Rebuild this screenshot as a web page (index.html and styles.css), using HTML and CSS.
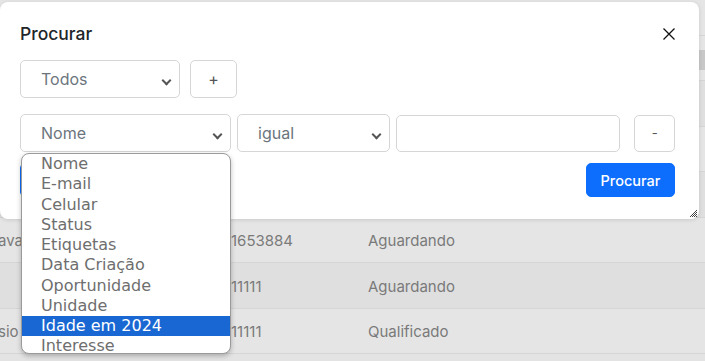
FILE: index.html
```html
<!DOCTYPE html>
<html lang="pt-BR">
<head>
	<meta charset="UTF-8">
	<title>Procurar</title>
	<link rel="stylesheet" href="styles.css">
</head>
<body>
	<!-- tabela de fundo (atras do modal) -->
	<div class="lista">
		<div class="linha topo"></div>
		<div class="linha"><span class="etiqueta"></span></div>
		<div class="linha escura"></div>
		<div class="linha"></div>
		<div class="linha escura"></div>
		<div class="linha">
			<span class="col1">ava</span>
			<span class="col2">1653884</span>
			<span class="col3">Aguardando</span>
		</div>
		<div class="linha escura">
			<span class="col1"></span>
			<span class="col2">11111</span>
			<span class="col3">Aguardando</span>
		</div>
		<div class="linha">
			<span class="col1">sio</span>
			<span class="col2">11111</span>
			<span class="col3">Qualificado</span>
		</div>
	</div>

	<div class="modal">
		<div class="modal-head">
			<h5>Procurar</h5>
			<button class="fechar" aria-label="Fechar">
				<svg width="12" height="12" viewBox="0 0 12 12"><path d="M0.5 0.5L11.5 11.5M11.5 0.5L0.5 11.5" stroke="#111" stroke-width="1.3" fill="none"/></svg>
			</button>
		</div>
		<div class="modal-body">
			<div class="fila">
				<div class="sel w-todos">Todos<i class="seta"></i></div>
				<button class="btn mais">+</button>
			</div>
			<div class="fila fila2">
				<div class="sel w-campo">Nome<i class="seta"></i></div>
				<div class="sel w-op">igual<i class="seta"></i></div>
				<input class="campo" type="text">
				<button class="btn menos">-</button>
			</div>
			<div class="fila fila3">
				<button class="btn limpar"></button>
				<button class="btn azul">Procurar</button>
			</div>
		</div>
		<svg class="redim" width="9" height="9" viewBox="0 0 9 9">
			<path d="M8 1L1 8M8 3L3 8M8 5L5 8M8 7L7 8" stroke="#444" stroke-width="1" fill="none"/>
		</svg>
	</div>

	<!-- lista aberta do select "Nome" -->
	<ul class="opcoes">
		<li>Nome</li>
		<li>E-mail</li>
		<li>Celular</li>
		<li>Status</li>
		<li>Etiquetas</li>
		<li>Data Criação</li>
		<li>Oportunidade</li>
		<li>Unidade</li>
		<li class="ativo">Idade em 2024</li>
		<li>Interesse</li>
	</ul>
</body>
</html>
```

FILE: styles.css
```css
*{
	margin: 0;
	padding: 0;
	box-sizing: border-box;
	list-style: none;
}
body{
	background: #e3e3e3;
	font-family: Inter, "Liberation Sans", sans-serif;
	overflow: hidden;
	width: 705px;
	height: 361px;
	position: relative;
}

/* fundo */
.lista{
	display: flex;
	flex-direction: column;
}
.linha{
	height: 45.43px;
	border-bottom: 1px solid #d5d5d5;
	background: #e5e5e5;
	display: flex;
	align-items: center;
	font-size: 15px;
	color: #7a7a7a;
	position: relative;
	padding-top: 2px;
}
.linha.escura{
	background: #dfdfdf;
}
.linha.topo{
	height: 36px;
}
.etiqueta{
	position: absolute;
	left: 697px;
	top: 14px;
	width: 20px;
	height: 20px;
	background: #c8c8c8;
}
.col1{
	width: 233px;
	margin-left: -2px;
	white-space: nowrap;
}
.col2{
	width: 137px;
	white-space: nowrap;
}

/* modal */
.modal{
	position: absolute;
	left: 0;
	top: 2px;
	width: 699px;
	height: 217px;
	background: #fff;
	border-radius: 8px;
	box-shadow: 0 1px 4px rgba(0,0,0,.12);
}
.modal-head{
	display: flex;
	justify-content: space-between;
	align-items: center;
	padding: 21px 24px 0 20px;
}
.modal-head h5{
	font-size: 17.5px;
	font-weight: 500;
	line-height: 22px;
	color: #212529;
}
.fechar{
	border: 0;
	background: none;
	width: 12px;
	height: 12px;
	display: flex;
}
.modal-body{
	padding: 15px 24px 0 20px;
	display: flex;
	flex-direction: column;
}
.fila{
	display: flex;
	align-items: center;
	gap: 10px;
}
.fila2{
	margin-top: 16px;
	gap: 6px;
}
.fila3{
	margin-top: 11px;
	justify-content: space-between;
}
.sel{
	height: 38px;
	border: 1px solid #d6d6d6;
	border-radius: 5px;
	padding-left: 20px;
	font-size: 16px;
	color: #6c757d;
	display: flex;
	align-items: center;
	position: relative;
}
.seta{
	position: absolute;
	right: 9px;
	top: 16px;
	width: 7px;
	height: 7px;
	border-right: 2px solid #555;
	border-bottom: 2px solid #555;
	transform: rotate(45deg);
}
.w-todos{ width: 160px; }
.w-campo{ width: 212px; }
.w-op{ width: 154px; }
.campo{
	width: 225px;
	height: 37px;
	border: 1px solid #d6d6d6;
	border-radius: 5px;
}
.btn{
	font-family: Inter, "Liberation Sans", sans-serif;
	background: #fff;
	border: 1px solid #d6d6d6;
	border-radius: 5px;
	color: #555;
	font-size: 16px;
}
.mais{
	width: 47px;
	height: 38px;
}
.menos{
	width: 41px;
	height: 37px;
	margin-left: 8px;
	font-size: 13px;
}
.limpar{
	width: 100px;
	height: 34px;
	border: 1.5px solid #0d6efd;
}
.azul{
	width: 89px;
	height: 34px;
	background: #0d6efd;
	border-color: #0d6efd;
	color: #fff;
	font-size: 14.5px;
	font-weight: 500;
}
.redim{
	position: absolute;
	right: 1px;
	bottom: 1px;
}

/* lista aberta */
.opcoes{
	position: absolute;
	left: 21px;
	top: 153px;
	width: 210px;
	height: 201px;
	background: #fff;
	border: 1px solid #9a9a9a;
	border-radius: 8px;
	overflow: hidden;
	box-shadow: 0 2px 5px rgba(0,0,0,.25);
	font-family: "DejaVu Sans", sans-serif;
	font-size: 16px;
	color: #6e6e6e;
}
.opcoes li{
	height: 20.25px;
	line-height: 20.25px;
	padding-left: 19px;
	white-space: nowrap;
}
.opcoes .ativo{
	background: #1967d2;
	color: #fff;
}
```
